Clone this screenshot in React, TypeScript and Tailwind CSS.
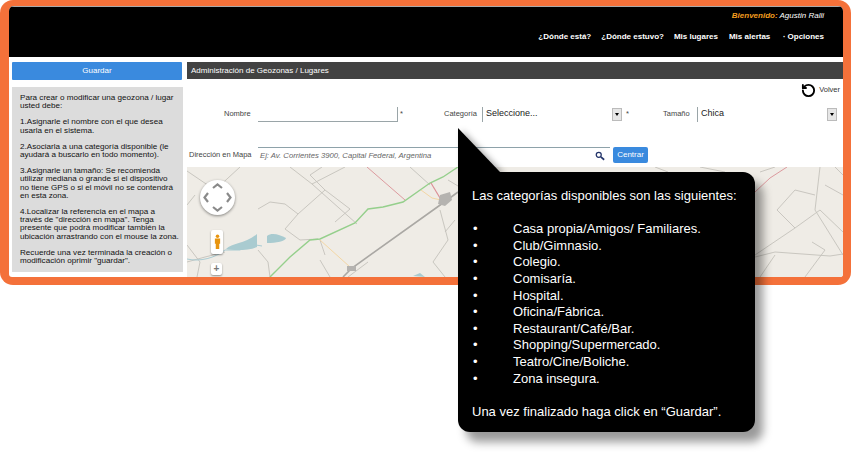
import React from 'react';
import { RotateCcw } from 'lucide-react';

const categorias = [
  'Casa propia/Amigos/ Familiares.',
  'Club/Gimnasio.',
  'Colegio.',
  'Comisaría.',
  'Hospital.',
  'Oficina/Fábrica.',
  'Restaurant/Café/Bar.',
  'Shopping/Supermercado.',
  'Teatro/Cine/Boliche.',
  'Zona insegura.',
];

const grises = [
  'M187 171 L215 190 L240 167', 'M187 245 L200 262 L197 277', 'M187 262 L205 257 L225 252',
  'M258 209 L270 202 L285 204 L298 214 L285 229 L300 240 L318 239', 'M298 214 L325 190 L350 209 L335 222',
  'M290 167 L312 184 L357 224', 'M325 190 L310 175 L322 167', 'M312 184 L345 167', 'M320 240 L325 255',
  'M258 250 L268 262 L270 277', 'M320 260 L330 277', 'M440 210 L448 240 L433 262 L445 277', 'M410 167 L430 185',
  'M368 262 L348 277', 'M755 257 L775 252 L830 256 L843 254', 'M777 210 L795 190 L815 195',
  'M777 210 L795 228 L755 255', 'M795 228 L820 210 L843 232', 'M805 277 L825 250 L812 242',
  'M820 167 L815 210 L843 255', 'M760 277 L775 255', 'M835 167 L843 175', 'M825 185 L843 195', 'M655 167 L668 172',
  'M700 167 L725 172', 'M775 167 L760 172', 'M458 186 L448 180', 'M455 220 L445 232', 'M195 195 L187 205',
];

function MapaFondo() {
  return (
    <svg viewBox="187 167 656 110" className="block h-[110px] w-[656px]">
      <rect x="187" y="167" width="656" height="110" fill="#efece6" />
      {grises.map((d) => (
        <path key={d} d={d} fill="none" stroke="#c4c2bb" strokeWidth="0.9" />
      ))}
      <path d="M187 259 C200 262 215 258 225 250 L240 250 L250 244 L262 246" fill="none" stroke="#a9cbd2" strokeWidth="1" />
      <path d="M226 249 C232 243 245 244 257 234 L257 247 C250 250 236 251 226 249 Z" fill="#a9cbd0" />
      <path d="M267 236 C272 232 280 235 286 238 C286 241 276 243 267 243 Z" fill="#a9cbd0" />
      <path d="M413 276 L420 273 L425 277 Z" fill="#a9cbd0" />
      <path d="M270 277 L290 257 L310 240 L320 239 L355 223 L368 209 L383 207 L403 202 L430 183 L443 177 L458 167" fill="none" stroke="#95cf8c" strokeWidth="1.4" />
      <path d="M343 277 L352 268 L443 203 L458 192" fill="none" stroke="#aaa8a4" strokeWidth="1.6" />
      <path d="M320 240 L350 267" fill="none" stroke="#f3d6a4" strokeWidth="1" />
      <path d="M421 190 L432 198 L441 200" fill="none" stroke="#f3d6a4" strokeWidth="1" />
      <path d="M367 167 L405 200" fill="none" stroke="#dc9a9e" strokeWidth="1" />
      <path d="M431 183 L443 203" fill="none" stroke="#dc8f96" strokeWidth="1.2" />
      <path d="M755 192 L770 178 L787 167" fill="none" stroke="#dc9a9e" strokeWidth="1" />
      <path d="M440 195 L450 192 L452 200 L445 206 L438 204 Z" fill="#b5b3b0" />
      <path d="M347 266 L356 266 L356 271 L347 271 Z" fill="#b5b3b0" />
    </svg>
  );
}

function Flecha() {
  return (
    <span className="flex h-[13px] w-[10px] items-center justify-center border border-[#bbb] bg-[#e6e6e6]">
      <span className="h-0 w-0 border-x-[2.5px] border-t-[3px] border-x-transparent border-t-black" />
    </span>
  );
}

function App() {
  return (
    <div className="relative h-[455px] w-[851px] overflow-hidden bg-white font-['Liberation_Sans',sans-serif]">
      <div className="h-[285px] w-[851px] rounded-[13px] bg-[#f4713a] pb-[8px] pl-[9px] pr-[8px] pt-[6px]">
        <div className="flex h-[271px] flex-col overflow-hidden rounded-b-[3px] rounded-t-[5px] bg-white">
          <header className="flex h-[51px] flex-col items-end border-t border-[#aaa] bg-black pr-[19px] pt-[3px]">
            <p className="text-[8px] italic leading-[12px] text-white">
              <span className="font-bold text-[#f39c1f]">Bienvenido:</span> Agustin Ralli
            </p>
            <nav className="mt-[9px] flex gap-[10px] text-[8px] font-bold leading-[12px] text-white">
              <span>¿Dónde está?</span>
              <span>¿Dónde estuvo?</span>
              <span>Mis lugares</span>
              <span className="ml-[1px]">Mis alertas</span>
              <span className="ml-[3px]">‧ Opciones</span>
            </nav>
          </header>

          <div className="flex flex-1 pl-[3px] pt-[5px]">
            <aside className="w-[171px] shrink-0">
              <button className="block h-[18px] w-[170px] rounded-[1px] bg-[#3a8ade] text-[8px] text-white">Guardar</button>
              <div className="mt-[7px] h-[185px] whitespace-nowrap bg-[#dcdcdc] pl-[8px] pt-[7px] text-[8.1px] leading-[8.2px] text-[#111]">
                <p>Para crear o modificar una geozona / lugar<br />usted debe:</p>
                <p className="mt-[8px]">1.Asignarle el nombre con el que desea<br />usarla en el sistema.</p>
                <p className="mt-[8px]">2.Asociarla a una categoría disponible (le<br />ayudará a buscarlo en todo momento).</p>
                <p className="mt-[8px]">3.Asignarle un tamaño: Se recomienda<br />utilizar mediana o grande si el dispositivo<br />no tiene GPS o si el móvil no se contendrá<br />en esta zona.</p>
                <p className="mt-[8px]">4.Localizar la referencia en el mapa a<br />través de "dirección en mapa". Tenga<br />presente que podrá modificar también la<br />ubicación arrastrando con el mouse la zona.</p>
                <p className="mt-[8px]">Recuerde una vez terminada la creación o<br />modificación oprimir "guardar".</p>
              </div>
            </aside>

            <main className="ml-[4px] flex w-[656px] flex-col">
              <h1 className="h-[17px] bg-[#424242] pl-[4px] text-[8px] leading-[17px] text-white">Administración de Geozonas / Lugares</h1>
              <div className="mt-[2px] flex h-[18px] items-center justify-end gap-[3px] pr-[3px] text-[7.5px] text-[#333]">
                <RotateCcw size={15} strokeWidth={3} className="text-black" />
                <span>Volver</span>
              </div>
              <div className="mt-[5px] flex h-[20px] items-center text-[7.5px] text-[#444]">
                <span className="ml-[37px] w-[34px]">Nombre</span>
                <span className="h-[15px] w-[140px] border-b border-r border-[#9aa5a8]" />
                <span className="ml-[2px] w-[44px] self-start pt-[4px]">*</span>
                <span className="w-[38px]">Categoría</span>
                <span className="flex h-[15px] w-[140px] items-center justify-between border-l border-[#9aa5a8] pl-[3px] text-[9px] text-[#222]">
                  Seleccione...
                  <Flecha />
                </span>
                <span className="ml-[4px] w-[37px] self-start pt-[4px]">*</span>
                <span className="w-[34px]">Tamaño</span>
                <span className="flex h-[15px] w-[140px] items-center justify-between border-l border-[#9aa5a8] pl-[3px] text-[9px] text-[#222]">
                  Chica
                  <Flecha />
                </span>
              </div>
              <div className="mt-[23px] flex h-[16px] items-center">
                <span className="ml-[2px] w-[69px] whitespace-nowrap text-[7.5px] text-[#444]">Dirección en Mapa</span>
                <span className="flex h-[16px] w-[352px] items-center justify-between border-t border-[#8ea2aa] pl-[2px] pr-[5px] text-[7.7px] italic text-[#666]">
                  Ej: Av. Corrientes 3900, Capital Federal, Argentina
                  <svg viewBox="0 0 12 12" className="h-[10px] w-[10px]">
                    <circle cx="4.5" cy="4.5" r="3" fill="none" stroke="#23346a" strokeWidth="1.5" />
                    <path d="M7 7 L11 10.5" stroke="#23346a" strokeWidth="2" />
                  </svg>
                </span>
                <button className="ml-[3px] h-[16px] w-[35px] rounded-[2px] bg-[#3a8ade] text-[8px] text-white">Centrar</button>
              </div>
              <div className="relative mt-[4px] h-[110px]">
                <MapaFondo />
                <div className="absolute left-[13px] top-[13px] flex h-[35px] w-[35px] items-center justify-center rounded-full bg-white shadow-[0_1px_3px_rgba(0,0,0,0.45)]">
                  <svg viewBox="0 0 35 35" className="h-[35px] w-[35px]">
                    <path d="M13 8 L17.5 4.5 L22 8 M13 27 L17.5 30.5 L22 27 M8 13 L4.5 17.5 L8 22 M27 13 L30.5 17.5 L27 22" fill="none" stroke="#8a8a8a" strokeWidth="2.2" />
                  </svg>
                </div>
                <div className="absolute left-[24px] top-[63px] flex h-[24px] w-[12px] items-center justify-center rounded-[2px] bg-white shadow-[0_1px_2px_rgba(0,0,0,0.4)]">
                  <svg viewBox="0 0 8 18" className="h-[16px] w-[7px]">
                    <circle cx="4" cy="2.5" r="2" fill="#e8950f" />
                    <path d="M1 5 H7 V11 H6 V17 H2 V11 H1 Z" fill="#e8950f" />
                  </svg>
                </div>
                <div className="absolute left-[24px] top-[96px] flex h-[12px] w-[11px] items-center justify-center rounded-[2px] bg-white text-[10px] font-bold leading-none text-[#777] shadow-[0_1px_2px_rgba(0,0,0,0.4)]">+</div>
              </div>
            </main>
          </div>
        </div>
      </div>

      {/* globo de ayuda sobre el formulario */}
      <div className="absolute left-[458px] top-[172px] h-[260px] w-[297px] rounded-b-[12px] rounded-tr-[12px] bg-black pl-[14px] pt-[16px] text-[13px] leading-[16.6px] text-white shadow-[8px_10px_10px_rgba(0,0,0,0.4)]">
        <p>Las categorías disponibles son las siguientes:</p>
        <ul className="mt-[16.6px]">
          {categorias.map((c) => (
            <li key={c} className="flex">
              <span className="w-[41px] pl-[1px]">•</span>
              {c}
            </li>
          ))}
        </ul>
        <p className="mt-[16.6px]">Una vez finalizado haga click en “Guardar”.</p>
      </div>
      <svg viewBox="0 0 42 45" className="absolute left-[458px] top-[128px] h-[45px] w-[42px] drop-shadow-[4px_2px_3px_rgba(0,0,0,0.35)]">
        <path d="M0 0 L42 44 L42 45 L0 45 Z" fill="#000" />
      </svg>
    </div>
  );
}

export default App;
